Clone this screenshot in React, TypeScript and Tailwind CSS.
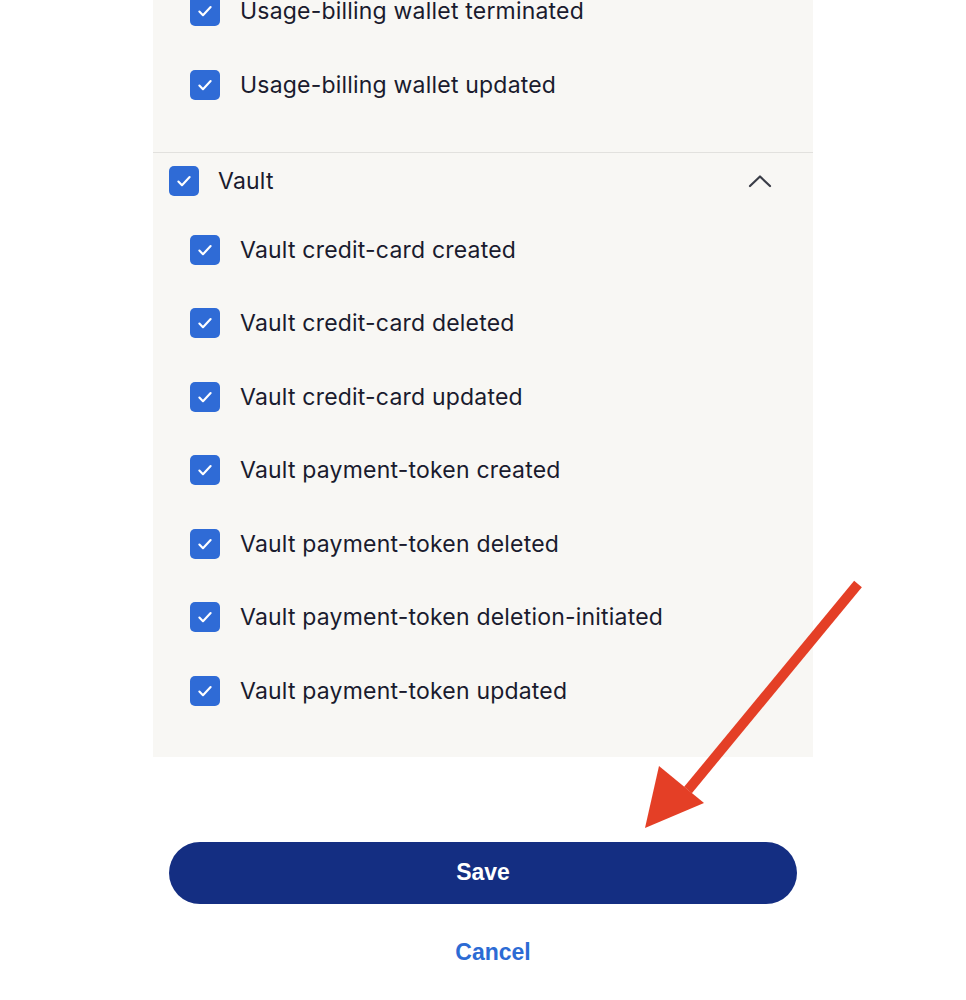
import React from 'react';

const usageItems = ['Usage-billing wallet terminated', 'Usage-billing wallet updated'];

const vaultItems = [
  'Vault credit-card created',
  'Vault credit-card deleted',
  'Vault credit-card updated',
  'Vault payment-token created',
  'Vault payment-token deleted',
  'Vault payment-token deletion-initiated',
  'Vault payment-token updated',
];

function Check() {
  return (
    <span className="flex h-[30px] w-[30px] shrink-0 items-center justify-center rounded-[5px] bg-[#2f6bd6]">
      <svg width="18" height="18" viewBox="0 0 16 16" fill="none">
        <path d="M3 8.5l3.2 3.2L13 4.5" stroke="white" strokeWidth="1.9" strokeLinecap="round" strokeLinejoin="round" />
      </svg>
    </span>
  );
}

function Row({ label }: { label: string }) {
  return (
    <div className="flex items-center gap-5">
      <Check />
      <span className="text-[23px] tracking-[0.2px] text-[#1a1b2e]">{label}</span>
    </div>
  );
}

export default function App() {
  return (
    <div className="relative h-[1000px] overflow-hidden bg-white font-['Inter',sans-serif]">
      <div className="ml-[153px] -mt-[26px] w-[660px] bg-[#f8f7f4]">
        <div className="pl-[37px] pb-[30px]">
          {usageItems.map((item) => (
            <div key={item} className="flex h-[74px] items-center">
              <Row label={item} />
            </div>
          ))}
        </div>
        <div className="border-t border-[#e2e1de]">
          <div className="flex h-[56px] items-center justify-between pl-[16px] pr-[41px]">
            <div className="flex items-center gap-[19px]">
              <Check />
              <span className="text-[23px] tracking-[0.2px] text-[#1a1b2e]">Vault</span>
            </div>
            <svg width="24" height="14" viewBox="0 0 24 14" fill="none">
              <path d="M2 12L12 2.5 22 12" stroke="#3a3d47" strokeWidth="2.2" strokeLinecap="round" strokeLinejoin="round" />
            </svg>
          </div>
          <div className="mt-[4px] pl-[37px] pb-[29px]">
            {vaultItems.map((item) => (
              <div key={item} className="flex h-[73.5px] items-center">
                <Row label={item} />
              </div>
            ))}
          </div>
        </div>
      </div>

      <div className="mt-[85px] ml-[169px] w-[628px]">
        <button className="flex h-[62px] w-full items-center justify-center rounded-full bg-[#142e82] font-['Liberation_Sans',Arial,sans-serif] text-[23px] font-bold text-white">
          Save
        </button>
        <div className="mt-[31px] pl-[20px] text-center font-['Liberation_Sans',Arial,sans-serif] text-[23px] font-bold text-[#2c6bd4]">
          Cancel
        </div>
      </div>

      <svg className="absolute left-0 top-0" width="966" height="1000" viewBox="0 0 966 1000" fill="none">
        <line x1="858" y1="584" x2="688" y2="790" stroke="#e43f26" strokeWidth="10" />
        <polygon points="645,828 659,766 704,803" fill="#e43f26" />
      </svg>
    </div>
  );
}
